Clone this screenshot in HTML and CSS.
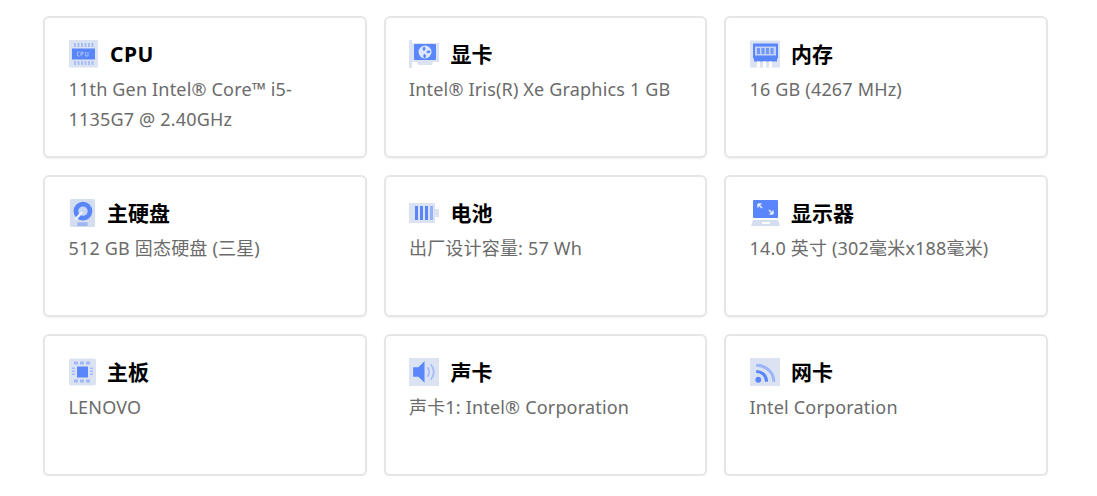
FILE: index.html
```html
<!DOCTYPE html>
<html lang="zh">
<head>
<meta charset="utf-8">
<title>硬件信息</title>
<link rel="stylesheet" href="styles.css">
</head>
<body>
<main class="grid">
  <section class="card">
    <h3 class="head"><svg class="icon" viewBox="0 0 30 28"><rect width="29" height="27.500" fill="#dbe3f2"/><path d="M5 3h2v4H5zM8.500 3h2v4h-2zM12 3h2v4h-2zM15.500 3h2v4h-2zM19 3h2v4h-2zM22.500 3h2v4h-2zM5 21h2v4H5zM8.500 21h2v4h-2zM12 21h2v4h-2zM15.500 21h2v4h-2zM19 21h2v4h-2zM22.500 21h2v4h-2z" fill="#a9bdf5"/><rect x="3" y="8.500" width="23" height="11" fill="#5a86fb"/><path d="M10.500 12H8.500v4h2M12 16v-4h2v2h-2M16.500 12v4h2.500v-4" fill="none" stroke="#b9ccfd" stroke-width=".8"/></svg><span class="name cpu">CPU</span></h3>
    <p class="desc">11th Gen Intel® Core™ i5-1135G7 @ 2.40GHz</p>
  </section>
  <section class="card">
    <h3 class="head"><svg class="icon" viewBox="0 0 30 28"><path d="M0 0h3v28H0z M3 3h27v19H24l-1 3H9l-1-3H3z" fill="#dbe3f2"/><rect x="5" y="4" width="22" height="16" rx="1" fill="#5a86fb"/><circle cx="16" cy="12" r="6.500" fill="#dbe6fd"/><path d="M15 11c-2-1-2-3 0-4.500 2 1 2 3 0 4.500zM17.500 12c1-2 3-2 4-.5-1 2-3 2.500-4 .5zM15 14c2 0 2.500 2 1.500 4-2 0-3-2-1.500-4z" fill="#5a86fb"/></svg><span class="name">显卡</span></h3>
    <p class="desc">Intel® Iris(R) Xe Graphics 1 GB</p>
  </section>
  <section class="card">
    <h3 class="head"><svg class="icon" viewBox="0 0 30 27"><rect width="30" height="27" fill="#dbe3f2"/><path d="M3 3h25v15h-1v3H4v-3H3z" fill="#5a86fb"/><rect x="5" y="6" width="21" height="9" fill="#c3d2f5"/><path d="M7 7.500h3v6H7zM11.500 7.500h3v6h-3zM16 7.500h3v6h-3zM20.500 7.500h3v6h-3z" fill="#6f96fa"/><path d="M7 21h3v6H7zM13 21h3v6h-3zM19 21h3v6h-3z" fill="#fff"/></svg><span class="name">内存</span></h3>
    <p class="desc">16 GB (4267 MHz)</p>
  </section>
  <section class="card">
    <h3 class="head"><svg class="icon small" viewBox="0 0 27 30"><rect width="27" height="30" rx="2" fill="#d5deef"/><circle cx="14" cy="13" r="10" fill="#5a86fb"/><circle cx="14" cy="13" r="5" fill="#c9d7f5"/><path d="M6 22l7-8" stroke="#eef3fe" stroke-width="2.500"/><rect x="8" y="25" width="11" height="4" fill="#9cb6f8"/></svg><span class="name">主硬盘</span></h3>
    <p class="desc">512 GB 固态硬盘 (三星)</p>
  </section>
  <section class="card">
    <h3 class="head"><svg class="icon" viewBox="0 0 30 20"><path d="M0 0h26v20H0zM26 6h4v8h-4z" fill="#dbe3f2"/><path d="M6 3h3v14H6zM11 3h3v14h-3zM16 3h3v14h-3z" fill="#5a86fb"/><path d="M21 3h3v14h-3z" fill="#94b0f9"/></svg><span class="name">电池</span></h3>
    <p class="desc">出厂设计容量: 57 Wh</p>
  </section>
  <section class="card">
    <h3 class="head"><svg class="icon" viewBox="0 0 30 28"><rect x="3" y="1" width="25" height="18" rx="1" fill="#5a86fb"/><path d="M1 27l2-6h25l2 6z" fill="#d5deef"/><rect x="12" y="23" width="8" height="2" fill="#fff"/><path d="M8 5l4 4M8 5v3.500M8 5h3.500M23 15l-4-4M23 15v-3.500M23 15h-3.500" fill="none" stroke="#e7eefe" stroke-width="1.500"/></svg><span class="name">显示器</span></h3>
    <p class="desc">14.0 英寸 (302毫米x188毫米)</p>
  </section>
  <section class="card">
    <h3 class="head"><svg class="icon small" viewBox="0 0 27 27"><rect width="27" height="27" rx="2" fill="#dbe3f2"/><rect x="8" y="8" width="11" height="11" fill="#5a86fb"/><path d="M5 3h4v3H5zM11 3h4v3h-4zM17 3h4v3h-4zM5 21h4v3H5zM11 21h4v3h-4zM17 21h4v3h-4zM3 9h3v1.500H3zM3 12h3v1.500H3zM3 15h3v1.500H3zM21 9h3v1.500h-3zM21 12h3v1.500h-3zM21 15h3v1.500h-3z" fill="#a0b8f7"/></svg><span class="name">主板</span></h3>
    <p class="desc">LENOVO</p>
  </section>
  <section class="card">
    <h3 class="head"><svg class="icon" viewBox="0 0 29 27"><rect width="29" height="27" rx="1" fill="#dbe3f2"/><path d="M4 9h5l6-6v21l-6-6H4z" fill="#5a86fb"/><path d="M18 9c2 3 2 6 0 9M21 6c4 5 4 10 0 15" fill="none" stroke="#a6bdf8" stroke-width="1.800"/></svg><span class="name">声卡</span></h3>
    <p class="desc">声卡1: Intel® Corporation</p>
  </section>
  <section class="card">
    <h3 class="head"><svg class="icon" viewBox="0 0 29 27"><rect width="29" height="27" rx="1" fill="#dbe3f2"/><circle cx="8" cy="21" r="2.800" fill="#5a86fb"/><path d="M6 13c6 0 10 4 10 10" fill="none" stroke="#5a86fb" stroke-width="3"/><path d="M6 7c10 0 17 7 17 16" fill="none" stroke="#9db6f8" stroke-width="3"/></svg><span class="name">网卡</span></h3>
    <p class="desc">Intel Corporation</p>
  </section>
</main>
</body>
</html>
```
FILE: styles.css
```css
* { box-sizing: border-box; }
html, body { margin: 0; background: #fff; }
body {
  font-family: "Noto Sans", "Noto Sans CJK SC", sans-serif;
  color: #666;
}
.grid {
  display: grid;
  grid-template-columns: repeat(3, 323.5px);
  grid-auto-rows: 142px;
  column-gap: 17px;
  row-gap: 17px;
  padding: 16px 0 0 43px;
}
.card {
  border: 2px solid #e6e6e6;
  border-radius: 6px;
  padding: 22px 23.5px 0 23.5px;
  box-shadow: 0 1px 2px rgba(0,0,0,.06);
  background: #fff;
}
.head {
  display: flex;
  align-items: center;
  margin: 0;
  height: 28px;
  color: #000;
  font-size: 21px;
  font-weight: 700;
}
.icon { width: 30px; height: 28px; margin-right: 11.5px; flex: none; }
.icon.small { width: 27px; height: 28px; margin-right: 11.5px; }
.name { line-height: 28px; }
.cpu { letter-spacing: .5px; }
.desc {
  margin: 6px 0 0;
  font-size: 18px;
  line-height: 30px;
  letter-spacing: .18px;
  color: #6b6b6b;
}
```
